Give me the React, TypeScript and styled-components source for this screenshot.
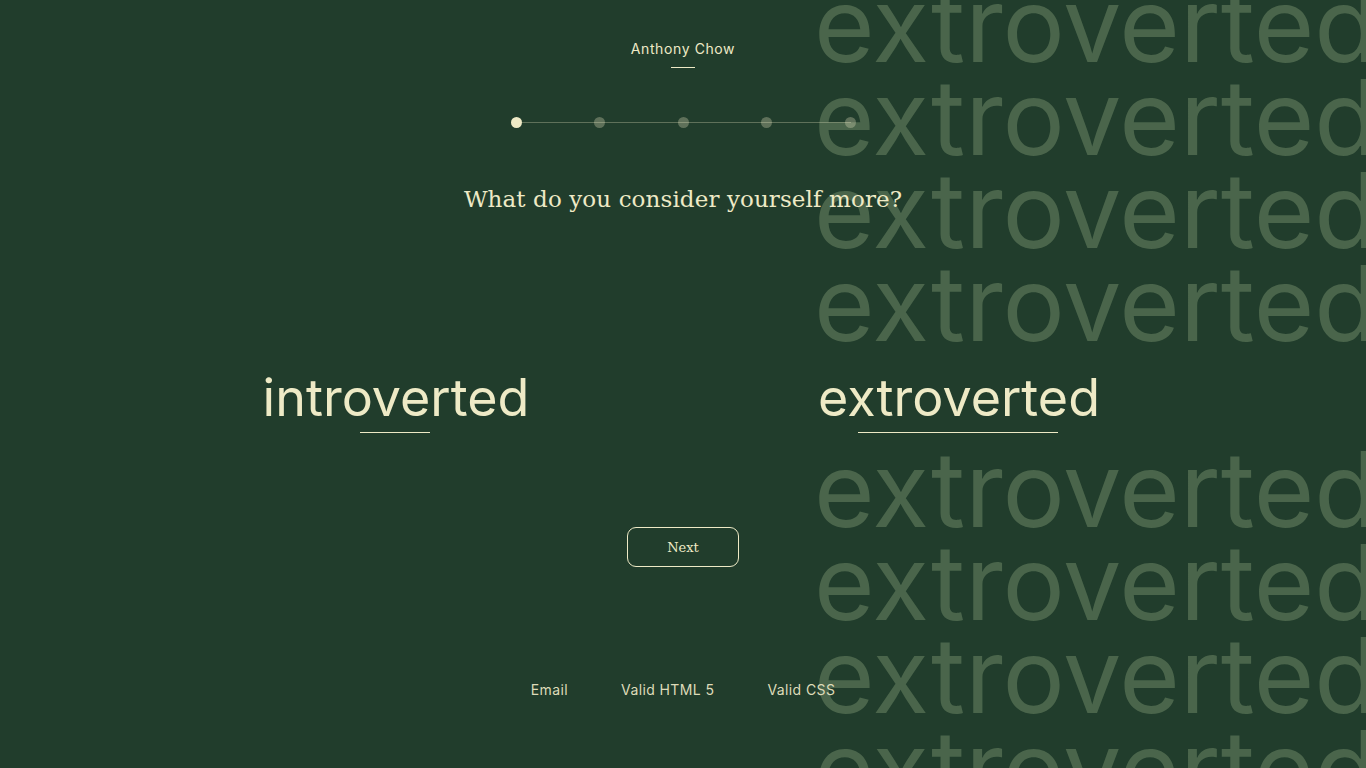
import React from "react";
import styled, { createGlobalStyle } from "styled-components";

const BG = "#213d2c";
const CREAM = "#eeeac6";
const SANS = `"Inter", "DejaVu Sans", sans-serif`;
const SERIF = `"DejaVu Serif", "Liberation Serif", serif`;

const Global = createGlobalStyle`
  html, body { margin: 0; padding: 0; background: ${BG}; }
  body { font-family: ${SANS}; color: ${CREAM}; }
  * { box-sizing: border-box; }
`;

const Page = styled.div`
  position: relative;
  width: 100%;
  height: 768px;
  overflow: hidden;
  background: ${BG};
`;

const Backdrop = styled.div`
  position: absolute;
  left: 814px;
  top: -22px;
  z-index: 0;
  display: flex;
  flex-direction: column;
  pointer-events: none;
`;

const BackWord = styled.div`
  font-family: ${SANS};
  font-size: 104px;
  line-height: 93px;
  font-weight: 400;
  color: #4a654b;
  white-space: nowrap;
`;

const Main = styled.main`
  position: relative;
  z-index: 1;
  display: flex;
  flex-direction: column;
  align-items: center;
  padding-top: 40px;
`;

const Name = styled.div`
  font-size: 14px;
  line-height: 17px;
  letter-spacing: 0.6px;
  color: ${CREAM};
`;

const Rule = styled.div<{ $w: number; $mt: number }>`
  width: ${(p) => p.$w}px;
  height: 1px;
  margin-top: ${(p) => p.$mt}px;
  background: ${CREAM};
`;

const Steps = styled.ol`
  position: relative;
  list-style: none;
  margin: 49px 0 0;
  padding: 0;
  width: 345px;
  display: flex;
  justify-content: space-between;
  &::before {
    content: "";
    position: absolute;
    left: 5px;
    right: 5px;
    top: 5px;
    height: 1px;
    background: rgba(238, 234, 198, 0.3);
  }
`;

const Dot = styled.li<{ $active?: boolean }>`
  position: relative;
  width: 11px;
  height: 11px;
  border-radius: 50%;
  background: ${(p) => (p.$active ? CREAM : "rgba(238, 234, 198, 0.3)")};
`;

const Question = styled.h1`
  margin: 56px 0 0;
  font-family: ${SERIF};
  font-weight: 400;
  font-size: 23px;
  line-height: 30px;
  letter-spacing: 0.1px;
  color: ${CREAM};
`;

const Options = styled.div`
  align-self: stretch;
  margin-top: 142px;
  padding: 12px 127px 12px 113px;
  background: ${BG};
  display: grid;
  grid-template-columns: 1fr 1fr;
`;

const Option = styled.button`
  display: flex;
  flex-direction: column;
  align-items: center;
  background: none;
  border: none;
  padding: 0;
  cursor: pointer;
  color: ${CREAM};
  font-family: ${SANS};
  font-size: 52px;
  line-height: 60px;
  font-weight: 400;
`;

const OptionLabel = styled.span`
  padding-left: 3px;
`;

const NextButton = styled.button`
  margin-top: 82px;
  width: 112px;
  height: 40px;
  border: 1px solid ${CREAM};
  border-radius: 9px;
  background: transparent;
  color: ${CREAM};
  font-family: ${SERIF};
  font-size: 13px;
  cursor: pointer;
`;

const Footer = styled.footer`
  margin-top: 114px;
  display: flex;
  gap: 53px;
`;

const FootLink = styled.a`
  font-size: 14px;
  line-height: 17px;
  color: #dedbb9;
  text-decoration: none;
  letter-spacing: 0.4px;
`;

const rows = ["extroverted", "extroverted", "extroverted", "extroverted", "", "extroverted", "extroverted", "extroverted", "extroverted"];

export default function App() {
  return (
    <>
      <Global />
      <Page>
        <Backdrop aria-hidden>
          {rows.map((r, i) => (
            <BackWord key={i}>{r || "\u00a0"}</BackWord>
          ))}
        </Backdrop>
        <Main>
          <Name>Anthony Chow</Name>
          <Rule $w={24} $mt={10} />
          <Steps>
            <Dot $active />
            <Dot />
            <Dot />
            <Dot />
            <Dot />
          </Steps>
          <Question>What do you consider yourself more?</Question>
          <Options>
            <Option>
              <OptionLabel>introverted</OptionLabel>
              <Rule $w={70} $mt={4} />
            </Option>
            <Option>
              <OptionLabel>extroverted</OptionLabel>
              <Rule $w={200} $mt={4} />
            </Option>
          </Options>
          <NextButton>Next</NextButton>
          <Footer>
            <FootLink href="#">Email</FootLink>
            <FootLink href="#">Valid HTML 5</FootLink>
            <FootLink href="#">Valid CSS</FootLink>
          </Footer>
        </Main>
      </Page>
    </>
  );
}
